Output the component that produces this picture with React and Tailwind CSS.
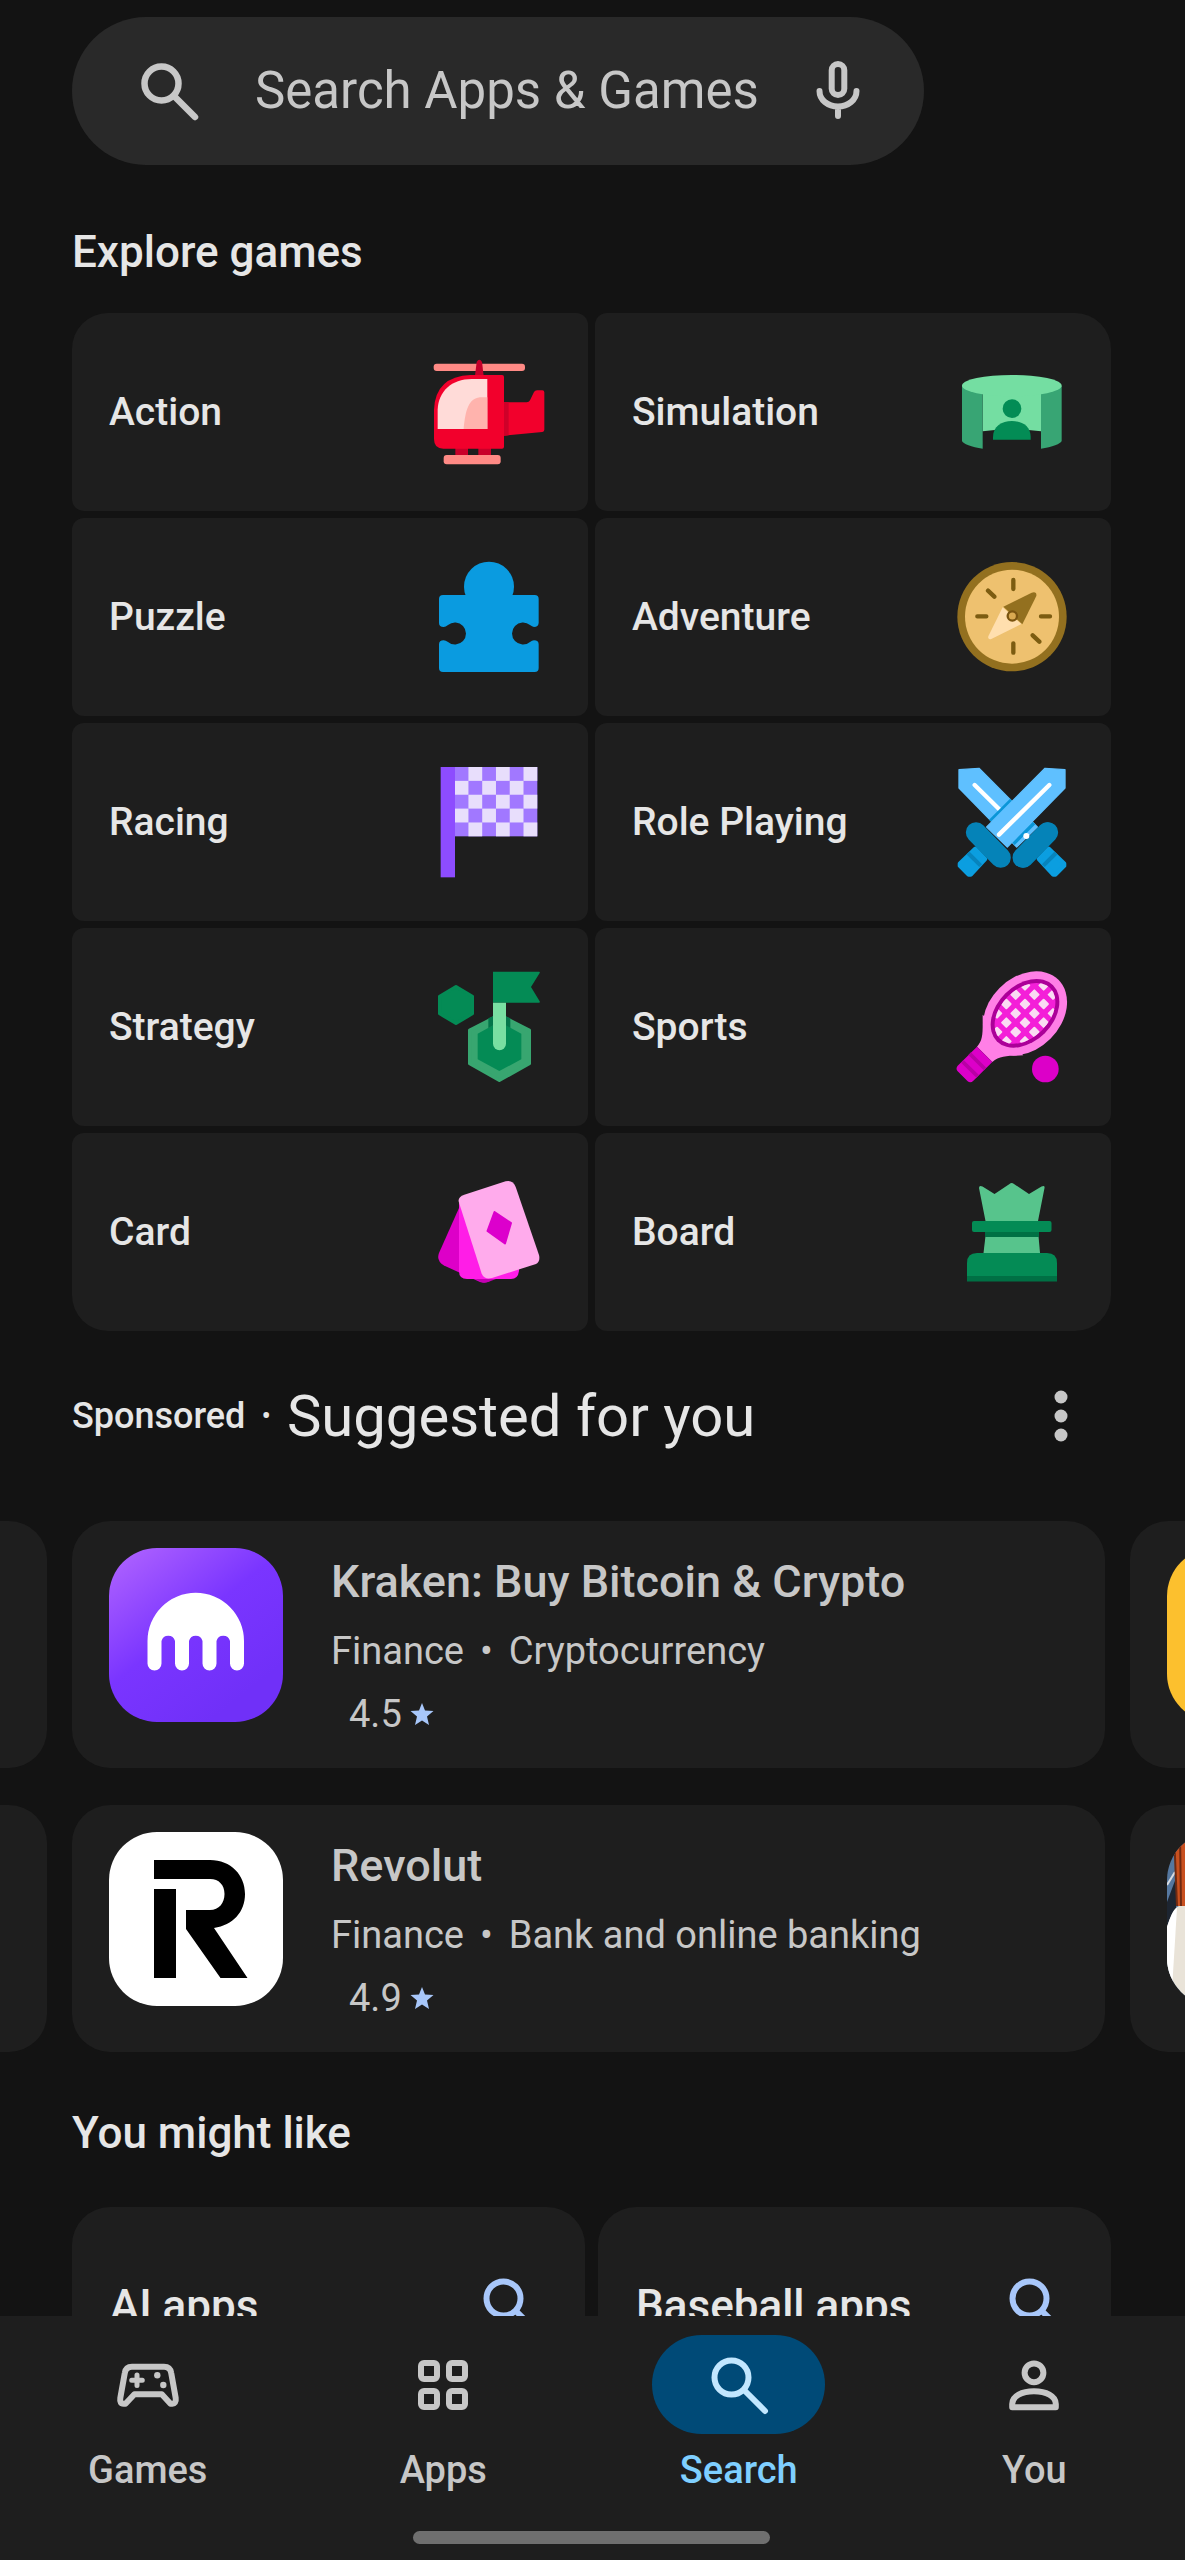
import React, { useState } from 'react'

const HelicopterIcon = () => (
  <svg viewBox="102 112 330 330" className="h-full w-full overflow-visible" aria-hidden="true">
    <rect x="101" y="132" width="274" height="22" rx="9" fill="#ff8a85" />
    <path d="M225 168 L230 127 Q238 114 246 127 L251 168Z" fill="#c4002a" />
    <path d="M312 248 H380 Q387 248 390 242 L402 217 Q405 212 411 212 H427 Q433 212 433 218 V330 Q433 336 427 337 L312 348Z" fill="#f2002c" />
    <path d="M312 248 H326 V347 L312 348Z" fill="#cf0029" />
    <rect x="166" y="385" width="38" height="22" fill="#c80029" />
    <rect x="235" y="385" width="38" height="22" fill="#c80029" />
    <path d="M312 172 V381 Q312 387 306 387 H130 Q102 387 102 358 V270 Q106 170 212 166 H306 Q312 166 312 172Z" fill="#f2002c" />
    <path d="M262 178 V328 H113 V270 C115 215 155 178 215 178Z" fill="#ffdbd8" />
    <path d="M262 233 V328 H191 C195 290 200 236 240 233Z" fill="#ffb3ad" />
    <rect x="131" y="406" width="171" height="28" rx="9" fill="#ff8a85" />
  </svg>
)

const PuzzleIcon = () => (
  <svg viewBox="102 725 330 330" className="h-full w-full overflow-visible" aria-hidden="true">
    <g fill="#0a9be0">
      <circle cx="267" cy="799" r="75" />
      <path d="M129 824 H404 Q416 824 416 836 V908 Q415 920 402 920 Q396 919 390 914 A33 33 0 1 0 390 965 Q396 960 402 960 Q416 960 416 972 V1043 Q416 1055 404 1055 H129 Q117 1055 117 1043 V972 Q117 960 131 960 Q137 960 144 965 A33 33 0 1 0 144 914 Q137 920 131 920 Q117 920 117 908 V836 Q117 824 129 824Z" />
    </g>
  </svg>
)

const SimulationIcon = () => (
  <svg viewBox="111 112 330 330" className="h-full w-full overflow-visible" aria-hidden="true">
    <path d="M188 200 H363 V335 Q276 322 188 335Z" fill="#74dea2" />
    <path d="M126 198 H188 V387 C155 382 128 372 126 364Z" fill="#38a574" />
    <path d="M425 198 H363 V387 C396 382 423 372 425 364Z" fill="#38a574" />
    <ellipse cx="275.500" cy="198" rx="149.500" ry="32" fill="#74dea2" />
    <circle cx="276" cy="267" r="28" fill="#038c55" />
    <path d="M219 360 V352 C219 320 245 304 276 304 S332 320 332 352 V360Z" fill="#038c55" />
  </svg>
)

const CompassIcon = () => (
  <svg viewBox="111 725 330 330" className="h-full w-full overflow-visible" aria-hidden="true">
    <circle cx="276" cy="889" r="164" fill="#93701f" />
    <circle cx="276" cy="889" r="141" fill="#eec16f" />
    <path
      d="M280 779 V806 M280 969 V997 M172 888 H199 M363 888 H390 M204 811 L223 829 M338 945 L358 964"
      stroke="#7c5c11"
      strokeWidth="13"
      strokeLinecap="round"
    />
    <path d="M248 861 L205 948 Q203 959 214 956 L304 911Z" fill="#ffdfae" />
    <path d="M250 859 L335 817 Q351 812 349 827 L307 912Z" fill="#93701f" />
    <circle cx="277" cy="887" r="14" fill="#d9a951" stroke="#7a5410" strokeWidth="7" />
  </svg>
)

const RacingFlagIcon = () => (
  <svg viewBox="102 108 330 330" className="h-full w-full overflow-visible" aria-hidden="true">
    <rect x="164" y="108" width="248" height="208" fill="#a178ff" />
    {[0, 1, 2, 3, 4].map((row) =>
      [0, 1, 2].map((col) => (
        <rect
          key={`${row}-${col}`}
          x={164 + (col * 2 + (row % 2 === 0 ? 1 : 0)) * 41.3}
          y={108 + row * 41.6}
          width="41.3"
          height="41.6"
          fill="#e8defc"
        />
      ))
    )}
    <rect x="122" y="108" width="43" height="331" fill="#8d4cff" />
  </svg>
)

const Sword = () => (
  <>
    <path d="M375 112 L435 116 V171 L262 348 L200 288Z" fill="#5fc0ff" stroke="#5fc0ff" strokeWidth="4" strokeLinejoin="round" />
    <path d="M388 162 L237 311" stroke="#fff" strokeWidth="13" strokeLinecap="round" />
    <path d="M166 354 L195 384 L152 430 L146 430 L120 404 V398Z" fill="#0b9ee0" stroke="#0b9ee0" strokeWidth="14" strokeLinejoin="round" />
    <path d="M144 366 L182 404" stroke="#0784bd" strokeWidth="12" />
    <path d="M168 304 L242 380" stroke="#0583b8" strokeWidth="61" strokeLinecap="round" />
  </>
)

const SwordsIcon = () => (
  <svg viewBox="111 108 330 330" className="h-full w-full overflow-visible" aria-hidden="true">
    <g transform="translate(552 0) scale(-1 1)">
      <Sword />
    </g>
    <path d="M270 203 L278 211 L215 274 L207 266Z M338 272 L346 280 L284 342 L276 334Z" fill="#0a96d8" />
    <path d="M382 304 L308 380" stroke="#0583b8" strokeWidth="61" strokeLinecap="round" />
    <Sword />
    <circle cx="319" cy="315" r="9" fill="#fff" />
  </svg>
)

const StrategyIcon = () => (
  <svg viewBox="102 723 330 330" className="h-full w-full overflow-visible" aria-hidden="true">
    <g strokeLinejoin="round" strokeWidth="10">
      <path d="M168 767 L217 796 V848 L168 877 L119 848 V796Z" fill="#048b55" stroke="#048b55" />
      <path d="M298 852 L388 898 V998 L298 1048 L209 998 V898Z" fill="#38a670" stroke="#38a670" />
    </g>
    <path d="M298 872 L364 908 V985 L298 1020 L233 985 V908Z" fill="#048b55" />
    <path d="M265 862 L298 846 L331 862 V891 L298 873 L265 891Z" fill="#03754a" />
    <path d="M279 722 H417 Q421 722 419 726 L393 768 L419 811 Q421 815 417 815 H279Z" fill="#048b55" />
    <path d="M279 815 H318 V938 A19.500 19.500 0 0 1 279 938Z" fill="#79dfa2" />
  </svg>
)

const RacketIcon = () => {
  const diamonds = []
  for (let row = 0; row < 8; row++) {
    for (let col = 0; col < 5; col++) {
      diamonds.push([203 + col * 56 + (row % 2) * 28, 762 + row * 28])
    }
  }

  return (
    <svg viewBox="111 722 330 330" className="h-full w-full overflow-visible" aria-hidden="true">
      <clipPath id="racket-strings">
        <ellipse cx="315" cy="846" rx="107" ry="72" transform="rotate(-45 315 846)" />
      </clipPath>
      <path d="M171 946 C190 925 188 905 188 850 L310 972 C265 974 240 972 217 992 Z" fill="#ff7fe6" />
      <ellipse cx="315" cy="846" rx="142" ry="108" transform="rotate(-45 315 846)" fill="#ff7fe6" />
      <ellipse cx="315" cy="846" rx="119" ry="84" transform="rotate(-45 315 846)" fill="#ab0098" />
      <g clipPath="url(#racket-strings)">
        <rect x="200" y="730" width="230" height="230" fill="#f41fd8" />
        {diamonds.map(([x, y]) => (
          <rect key={`${x}-${y}`} x={x - 12} y={y - 12} width="24" height="24" rx="3" transform={`rotate(45 ${x} ${y})`} fill="#fadcf3" />
        ))}
      </g>
      <path d="M171 946 L217 992 L160 1048 Q152 1056 143 1050 L113 1020 Q106 1012 113 1003Z" fill="#dc00c8" />
      <path d="M149 967 L195 1013 M127 990 L173 1035" stroke="#b900a6" strokeWidth="11" />
      <circle cx="376" cy="1013" r="40" fill="#dc00c8" />
    </svg>
  )
}

const CardsIcon = () => (
  <svg viewBox="0 0 110 110" className="h-full w-full overflow-visible" aria-hidden="true">
    <path d="M25 31 L5 76 Q2 84 10 88.500 L46 105 Q51 107 56 104 L60 100 L50 31Z" fill="#dd00c8" />
    <path d="M25 26 H85 V94 Q84 102 77 102 H33 Q25 102 25 94Z" fill="#ff1de7" />
    <path d="M42 102 H62 L54 105 Q50 106 46 104.500Z" fill="#c500b3" />
    <path d="M30.300 17.700 L71.600 4.300 Q79 2.500 81.700 10 L105 78 Q106.500 84.500 102 87 L58 101 Q50.500 103 47.700 96.700 L24.800 25 Q23.500 20 30.300 17.700Z" fill="#ffabec" />
    <path d="M60.500 35 L77 46 L71 66.500 L53.500 54Z" fill="#dc00cc" stroke="#dc00cc" strokeWidth="2" strokeLinejoin="round" />
  </svg>
)

const ChessIcon = () => (
  <svg viewBox="0 0 110 110" className="h-full w-full overflow-visible" aria-hidden="true">
    <path d="M28.500 44 L22 11 Q22 8 25.500 9.500 L37.500 17 L52.500 7 Q54.500 5 57 7 L72 17 L84.500 9.500 Q88 8 87.500 11 L81 44Z" fill="#57c48c" />
    <path d="M28.500 59 H81.500 L83 76 H26.500Z" fill="#57c48c" />
    <rect x="28" y="54" width="54" height="6" fill="#007044" />
    <rect x="15" y="44" width="79.500" height="11" rx="2" fill="#048b55" />
    <path d="M10 86 Q10 76 20 76 H90 Q100 76 100 86 V100 H10Z" fill="#048b55" />
    <path d="M10 99 H100 V104.500 H10Z" fill="#007044" />
  </svg>
)

const SearchIcon = ({ strokeWidth = 6 }) => (
  <svg viewBox="0 0 76 76" className="size-[76px] shrink-0" fill="none" stroke="currentColor" strokeWidth={strokeWidth} aria-hidden="true">
    <circle cx="30.500" cy="30.500" r="17" />
    <path d="M43 43 L64 64" strokeLinecap="round" />
  </svg>
)

const MicIcon = () => (
  <svg viewBox="0 0 76 76" className="size-[76px]" fill="none" stroke="currentColor" strokeWidth="6" strokeLinecap="round" aria-hidden="true">
    <rect x="31.700" y="11" width="12.600" height="31" rx="6.300" />
    <path d="M19.500 38 C19.500 47 28 53.500 38 53.500 S56.500 47 56.500 38 M38 54 V63" />
  </svg>
)

const GamepadIcon = () => (
  <svg viewBox="0 0 76 76" className="size-[76px]" fill="none" stroke="currentColor" aria-hidden="true">
    <path
      d="M22 19.700 H54 C58 19.700 60.600 22 61.200 26 L65.700 51 C66.300 55 64.500 56.700 62.500 56.700 H60.500 L51.800 47.300 H24.400 L15.500 56.700 H13.500 C11 56.700 9.700 55 10.300 51 L14.800 26 C15.400 22 18 19.700 22 19.700Z"
      strokeWidth="6"
      strokeLinejoin="round"
    />
    <path d="M27 28 V38.600 M21.700 33.300 H32.300" strokeWidth="5" strokeLinecap="round" />
    <circle cx="47.300" cy="28.300" r="3.200" fill="currentColor" stroke="none" />
    <circle cx="53.300" cy="38" r="3.200" fill="currentColor" stroke="none" />
  </svg>
)

const AppsIcon = () => (
  <svg viewBox="0 0 76 76" className="size-[76px]" fill="none" stroke="currentColor" strokeWidth="6" aria-hidden="true">
    <rect x="16" y="16" width="16" height="16" rx="3" />
    <rect x="44" y="16" width="16" height="16" rx="3" />
    <rect x="16" y="44" width="16" height="16" rx="3" />
    <rect x="44" y="44" width="16" height="16" rx="3" />
  </svg>
)

const PersonIcon = () => (
  <svg viewBox="0 0 76 76" className="size-[76px]" fill="none" stroke="currentColor" strokeWidth="6" strokeLinejoin="round" aria-hidden="true">
    <circle cx="38" cy="25.800" r="9.400" />
    <path d="M16.200 60.300 H59.800 V57 C59.800 49 50 44.300 38 44.300 S16.200 49 16.200 57Z" />
  </svg>
)

const StarIcon = () => (
  <svg viewBox="0 0 24 24" className="size-6" fill="#a8c7fa" aria-hidden="true">
    <path d="M12 1 L15 8.500 L23.500 9 L17 14.500 L19 23 L12 18.500 L5 23 L7 14.500 L0.500 9 L9 8.500Z" />
  </svg>
)

const KrakenLogo = () => (
  <svg viewBox="0 0 174 174" className="h-full w-full" aria-hidden="true">
    <defs>
      <linearGradient id="kraken-bg" x1="0" y1="0" x2="0.700" y2="0.900">
        <stop offset="0" stopColor="#b366ff" />
        <stop offset="0.550" stopColor="#7a35ff" />
        <stop offset="1" stopColor="#7030f8" />
      </linearGradient>
    </defs>
    <rect width="174" height="174" fill="url(#kraken-bg)" />
    <path
      d="M38.500 93 A48.200 48.200 0 0 1 135 93 V115.500 A7 7 0 0 1 121 115.500 V93 A7 7 0 0 0 107.500 93 V115.500 A7 7 0 0 1 93.500 115.500 V93 A7 7 0 0 0 80 93 V115.500 A7 7 0 0 1 66 115.500 V93 A7 7 0 0 0 52.500 93 V115.500 A7 7 0 0 1 38.500 115.500Z"
      fill="#fff"
    />
  </svg>
)

const RevolutLogo = () => (
  <svg viewBox="0 0 174 174" className="h-full w-full" aria-hidden="true">
    <rect width="174" height="174" fill="#fff" />
    <path d="M45 28 H101 C122 28 136 43 136 62 C136 80 124 93 105 96 L138.500 146 H111.500 L77 97 V78 H101 C110 78 115.500 71 115.500 62 C115.500 53 110 47 101 47 H45Z" />
    <path d="M45 57 H67 V146 H45Z" />
  </svg>
)

const YellowPreview = () => <div className="h-full w-full bg-[#fcc02e]" />

const PhotoPreview = () => (
  <svg viewBox="0 0 174 174" className="h-full w-full" aria-hidden="true">
    <rect width="174" height="174" fill="#55779f" />
    <path d="M0 70 L9 46 V80 L0 105Z" fill="#1d2531" />
    <path d="M0 53 L8 40" stroke="#d8dce2" strokeWidth="2" />
    <path d="M0 95 Q6 76 12 74 H174 V174 H0Z" fill="#e9e3d8" />
    <path d="M0 95 Q6 76 10 76 L4 174 H0Z" fill="#fff" />
    <path d="M7 0 H174 V74 H10Z" fill="#c8501f" />
    <path d="M7 0 L10 74 M13 0 L14 74" stroke="#6e2a12" strokeWidth="2" />
  </svg>
)

const categories = [
  { name: 'Action', Icon: HelicopterIcon, corner: 'rounded-tl-[36px]' },
  { name: 'Simulation', Icon: SimulationIcon, corner: 'rounded-tr-[36px]' },
  { name: 'Puzzle', Icon: PuzzleIcon },
  { name: 'Adventure', Icon: CompassIcon },
  { name: 'Racing', Icon: RacingFlagIcon },
  { name: 'Role Playing', Icon: SwordsIcon },
  { name: 'Strategy', Icon: StrategyIcon },
  { name: 'Sports', Icon: RacketIcon },
  { name: 'Card', Icon: CardsIcon, corner: 'rounded-bl-[36px]' },
  { name: 'Board', Icon: ChessIcon, corner: 'rounded-br-[36px]' }
]

const sponsoredApps = [
  { name: 'Kraken: Buy Bitcoin & Crypto', category: 'Finance', tag: 'Cryptocurrency', rating: '4.5', Logo: KrakenLogo, Next: YellowPreview },
  { name: 'Revolut', category: 'Finance', tag: 'Bank and online banking', rating: '4.9', Logo: RevolutLogo, Next: PhotoPreview }
]

const suggestions = ['AI apps', 'Baseball apps']

const tabs = [
  { id: 'games', label: 'Games', Icon: GamepadIcon },
  { id: 'apps', label: 'Apps', Icon: AppsIcon },
  { id: 'search', label: 'Search', Icon: SearchIcon },
  { id: 'you', label: 'You', Icon: PersonIcon }
]

const SponsoredRow = ({ app }) => {
  const { name, category, tag, rating, Logo, Next } = app

  return (
    <div className="flex gap-[25px] overflow-hidden">
      {/* Edge of the previous card */}
      <div className="w-[47px] shrink-0 rounded-r-[38px] bg-[#1e1e1e]" />

      <a href="#" className="flex min-w-0 flex-1 gap-12 rounded-[38px] bg-[#1e1e1e] pt-[27px] pb-[46px] pl-[37px] text-[#c7c7c7]">
        <span className="size-[174px] shrink-0 overflow-hidden rounded-[48px]">
          <Logo />
        </span>
        <span className="flex min-w-0 flex-col">
          <span className="text-[45px] leading-[68px] font-medium">{name}</span>
          <span className="flex gap-4 text-[38px] leading-[70px]">
            <span>{category}</span>
            <span>•</span>
            <span>{tag}</span>
          </span>
          {/* Runs into the card's bottom padding */}
          <span className="-mb-5 flex items-center gap-2 pl-[18px] text-[38px] leading-[56px]">
            {rating}
            <StarIcon />
          </span>
        </span>
      </a>

      {/* Edge of the next card */}
      <div className="w-[55px] shrink-0 overflow-hidden rounded-l-[38px] bg-[#1e1e1e] pt-[27px] pl-[37px]">
        <div className="size-[174px] overflow-hidden rounded-[48px]">
          <Next />
        </div>
      </div>
    </div>
  )
}

const App = () => {
  const [query, setQuery] = useState('')
  const [activeTab, setActiveTab] = useState('search')

  return (
    <div className="flex h-screen flex-col overflow-hidden bg-[#131313] font-['Roboto',sans-serif] text-[#e6e6e6]">
      <main className="min-h-0 flex-1 overflow-hidden pt-[17px]">
        {/* Search bar */}
        <div className="pr-[261px] pl-[72px]">
          <div className="flex h-[148px] items-center rounded-full bg-[#292929] pr-[48px] pl-[59px] text-[#c7c7c7]">
            <SearchIcon strokeWidth={6.5} />
            <input
              type="text"
              aria-label="Search Apps & Games"
              placeholder="Search Apps & Games"
              value={query}
              onChange={(e) => setQuery(e.target.value)}
              className="ml-12 min-w-0 flex-1 bg-transparent text-[51px] outline-none placeholder:text-[#c7c7c7]"
            />
            <button type="button" aria-label="Voice search">
              <MicIcon />
            </button>
          </div>
        </div>

        {/* Explore games */}
        <section className="pt-[59px] pr-[74px] pl-[72px]">
          <h2 className="mb-[33px] text-[44px] leading-[56px] font-medium">Explore games</h2>
          <div className="grid grid-cols-2 gap-x-[7px] gap-y-[7px]">
            {categories.map(({ name, Icon, corner }) => (
              <a
                key={name}
                href="#"
                className={`flex h-[198px] items-center justify-between rounded-[12px] bg-[#1e1e1e] pr-[44px] pl-[37px] text-[39px] font-medium ${corner || ''}`}
              >
                {name}
                <span className="size-[110px]">
                  <Icon />
                </span>
              </a>
            ))}
          </div>
        </section>

        {/* Sponsored */}
        <section className="pt-[49px]">
          <div className="mb-[69px] flex h-[72px] items-center pr-[74px] pl-[72px]">
            <span className="text-[36px] font-medium">Sponsored</span>
            <span className="mx-4 text-[28px]">•</span>
            <h2 className="text-[58px]">Suggested for you</h2>
            <button type="button" aria-label="More options" className="ml-auto flex size-[100px] items-center justify-center text-[#c7c7c7]">
              <svg viewBox="0 0 76 76" className="size-[76px]" fill="currentColor" aria-hidden="true">
                <circle cx="38" cy="19" r="6.500" />
                <circle cx="38" cy="38" r="6.500" />
                <circle cx="38" cy="57" r="6.500" />
              </svg>
            </button>
          </div>
          <div className="flex flex-col gap-[37px]">
            {sponsoredApps.map((app) => (
              <SponsoredRow key={app.name} app={app} />
            ))}
          </div>
        </section>

        {/* You might like */}
        <section className="pt-[53px] pr-[74px] pl-[72px]">
          <h2 className="mb-[46px] text-[44px] leading-[56px] font-medium">You might like</h2>
          <div className="grid grid-cols-2 gap-[13px]">
            {suggestions.map((text) => (
              <a
                key={text}
                href="#"
                className="flex h-[198px] items-center justify-between rounded-[38px] bg-[#1e1e1e] pr-[36px] pl-[38px] text-[44px] font-medium"
              >
                {text}
                <span className="text-[#a8c7fa]">
                  <SearchIcon />
                </span>
              </a>
            ))}
          </div>
        </section>
      </main>

      {/* Bottom navigation */}
      <nav className="shrink-0 bg-[#1e1e1e] pt-[19px] pr-[3px] pb-4">
        <div className="flex">
          {tabs.map(({ id, label, Icon }) => {
            const active = activeTab === id
            return (
              <button
                key={id}
                type="button"
                onClick={() => setActiveTab(id)}
                className={`flex flex-1 flex-col items-center text-[38px] leading-[48px] font-medium ${active ? 'text-[#7fcfff]' : 'text-[#c7c7c7]'}`}
              >
                <span className={`mb-3 flex h-[99px] w-[173px] items-center justify-center rounded-full ${active ? 'bg-[#004a77] text-[#c2e7ff]' : ''}`}>
                  <Icon />
                </span>
                {label}
              </button>
            )
          })}
        </div>
        {/* System gesture handle */}
        <div className="mx-auto mt-[37px] h-[13px] w-[357px] rounded-full bg-[#6f6f6f]" />
      </nav>
    </div>
  )
}

export default App
